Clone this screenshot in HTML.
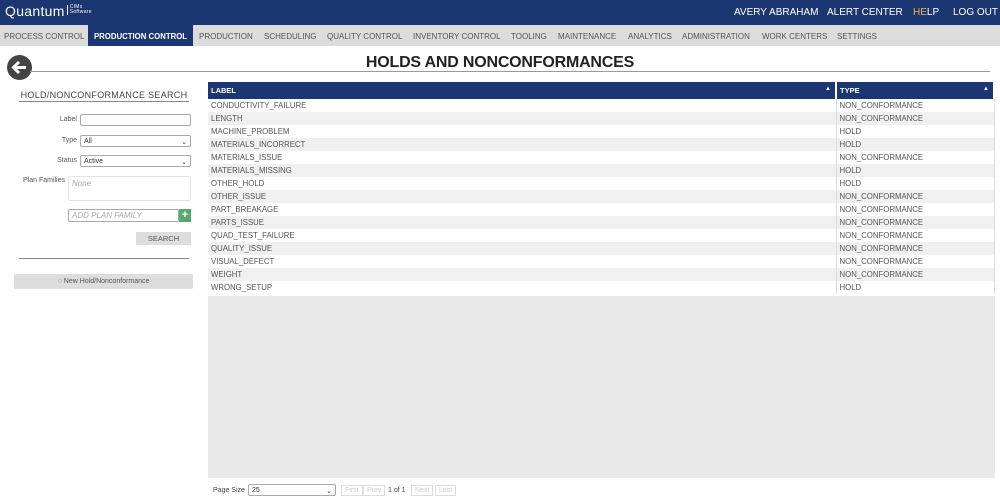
<!DOCTYPE html>
<html><head><style>
*{box-sizing:border-box;margin:0;padding:0}
body{width:1000px;height:498px;overflow:hidden;background:#fff;font-family:"Liberation Sans",sans-serif;color:#444;position:relative}
.top{position:absolute;left:0;top:0;width:1000px;height:25px;background:#1b3670;color:#fff}
.logo{position:absolute;left:5px;top:3px;font-size:14px;letter-spacing:.3px;white-space:nowrap}
.logo small{font-size:5px;display:inline-block;line-height:5px;vertical-align:top;margin-left:2px;border-left:1px solid #fff;padding-left:2px;margin-top:2px}
.tr{position:absolute;top:7px;font-size:10px;white-space:nowrap}
.nav{position:absolute;left:0;top:25px;width:1000px;height:21px;background:#dcdcdc;font-size:8px;color:#555;white-space:nowrap}
.nav span{position:absolute;top:7px}
.nav .act{top:0;height:21px;background:#1b3670;color:#fff;font-weight:bold;padding:7px 0 0;text-align:center;font-size:7.8px}
.back{position:absolute;left:7px;top:55px;width:25px;height:25px;border-radius:50%;background:#444}
.hr{position:absolute;left:30px;top:71px;width:960px;height:1px;background:#999}
h1{position:absolute;left:0;width:1000px;text-align:center;top:54px;font-size:16px;color:#222;font-weight:bold;letter-spacing:-.2px}
.lab{position:absolute;font-size:7px;color:#555;text-align:right}
.inp{position:absolute;border:1px solid #aaa;border-radius:2px;background:#fff;font-size:7px;padding:2px 3px;color:#333}
table{position:absolute;left:208px;top:82px;width:787px;border-collapse:collapse;font-size:7.8px;color:#555}
th{background:#1b3670;color:#fff;text-align:left;height:17px;padding-left:3px;font-size:7.5px;border-right:2px solid #fff}
td{height:13px;padding-left:3px;border-right:1px solid #ddd}
tr:nth-child(odd) td{background:#f0f0f0}
.gray{position:absolute;left:208px;top:296px;width:787px;height:182px;background:#e9e9e9}
.pg{position:absolute;font-size:7px;border:1px solid #ddd;color:#ccc;padding:1px 3px;top:485px}
</style></head><body>
<div class="top"><div class="logo">Quantum<small>CIMx<br>Software</small></div>
<span class="tr" style="left:734px">AVERY ABRAHAM</span><span class="tr" style="left:827px">ALERT CENTER</span><span class="tr" style="left:913px;color:#e8b84a">HE<span style="color:#fff">LP</span></span><span class="tr" style="left:953px">LOG OUT</span></div>
<div class="nav"><span style="left:4px">PROCESS CONTROL</span><span class="act" style="left:88px;width:105px">PRODUCTION CONTROL</span><span style="left:199px">PRODUCTION</span><span style="left:264px">SCHEDULING</span><span style="left:327px">QUALITY CONTROL</span><span style="left:413px">INVENTORY CONTROL</span><span style="left:511px">TOOLING</span><span style="left:558px">MAINTENANCE</span><span style="left:628px">ANALYTICS</span><span style="left:682px">ADMINISTRATION</span><span style="left:762px">WORK CENTERS</span><span style="left:837px">SETTINGS</span></div>
<div class="back"><svg width="25" height="25" viewBox="0 0 25 25"><path d="M19 12.5H7M12 7l-5.5 5.5L12 18" stroke="#fff" stroke-width="3" fill="none"/></svg></div>
<div class="hr"></div>
<h1>HOLDS AND NONCONFORMANCES</h1>
<div style="position:absolute;left:19px;top:90px;width:170px;font-size:9px;text-align:center;color:#444;letter-spacing:.3px;border-bottom:1px solid #888;padding-bottom:1px">HOLD/NONCONFORMANCE SEARCH</div>
<div class="lab" style="left:40px;top:116px;width:37px">Label</div><div class="inp" style="left:80px;top:114px;width:111px;height:12px"></div>
<div class="lab" style="left:40px;top:137px;width:37px">Type</div><div class="inp" style="left:80px;top:135px;width:111px;height:12px">All<span style="float:right">⌄</span></div>
<div class="lab" style="left:20px;top:157px;width:57px">Status</div><div class="inp" style="left:80px;top:155px;width:111px;height:12px">Active<span style="float:right">⌄</span></div>
<div class="lab" style="left:10px;top:177px;width:55px">Plan Families</div><div class="inp" style="left:68px;top:176px;width:123px;height:25px;border-color:#e4e4e4;color:#aaa;font-style:italic;font-size:8px">None</div>
<div class="inp" style="left:68px;top:209px;width:111px;height:13px;color:#aaa;font-style:italic;font-size:8px;padding-top:1px">ADD PLAN FAMILY</div><div style="position:absolute;left:179px;top:209px;width:12px;height:13px;background:#5aa86e;color:#fff;font-size:11px;font-weight:bold;text-align:center;line-height:13px">+</div>
<div style="position:absolute;left:136px;top:232px;width:55px;height:13px;background:#ddd;font-size:7.5px;text-align:center;line-height:13px;color:#555">SEARCH</div>
<div style="position:absolute;left:19px;top:258px;width:170px;height:1px;background:#888"></div>
<div style="position:absolute;left:14px;top:274px;width:179px;height:15px;background:#ddd;border-radius:2px;font-size:7px;text-align:center;line-height:15px;color:#555"><span style="color:#5aa86e">○</span> New Hold/Nonconformance</div>
<table>
<tr><th style="width:628px">LABEL<span style="float:right;margin-right:4px;font-size:6px">▲</span></th><th>TYPE<span style="float:right;margin-right:4px;font-size:6px">▲</span></th></tr>
<tr><td>CONDUCTIVITY_FAILURE</td><td>NON_CONFORMANCE</td></tr>
<tr><td>LENGTH</td><td>NON_CONFORMANCE</td></tr>
<tr><td>MACHINE_PROBLEM</td><td>HOLD</td></tr>
<tr><td>MATERIALS_INCORRECT</td><td>HOLD</td></tr>
<tr><td>MATERIALS_ISSUE</td><td>NON_CONFORMANCE</td></tr>
<tr><td>MATERIALS_MISSING</td><td>HOLD</td></tr>
<tr><td>OTHER_HOLD</td><td>HOLD</td></tr>
<tr><td>OTHER_ISSUE</td><td>NON_CONFORMANCE</td></tr>
<tr><td>PART_BREAKAGE</td><td>NON_CONFORMANCE</td></tr>
<tr><td>PARTS_ISSUE</td><td>NON_CONFORMANCE</td></tr>
<tr><td>QUAD_TEST_FAILURE</td><td>NON_CONFORMANCE</td></tr>
<tr><td>QUALITY_ISSUE</td><td>NON_CONFORMANCE</td></tr>
<tr><td>VISUAL_DEFECT</td><td>NON_CONFORMANCE</td></tr>
<tr><td>WEIGHT</td><td>NON_CONFORMANCE</td></tr>
<tr><td>WRONG_SETUP</td><td>HOLD</td></tr>
</table>
<div class="gray"></div>
<div style="position:absolute;left:213px;top:487px;font-size:7px;color:#444">Page Size</div>
<div class="inp" style="left:248px;top:484px;width:88px;height:12px">25<span style="float:right">⌄</span></div>
<span class="pg" style="left:341px">First</span><span class="pg" style="left:363px">Prev</span>
<span style="position:absolute;left:388px;top:487px;font-size:7px;color:#444">1 of 1</span>
<span class="pg" style="left:411px">Next</span><span class="pg" style="left:435px">Last</span>
</body></html>
